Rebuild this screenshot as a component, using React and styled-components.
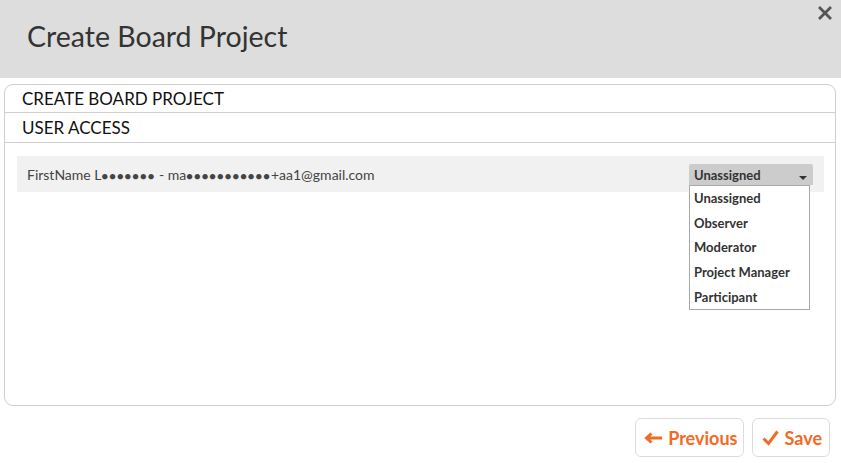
import React from "react";
import styled, { createGlobalStyle } from "styled-components";

const Global = createGlobalStyle`
  html, body { margin: 0; padding: 0; background: #fff; }
  body { font-family: Lato, "Open Sans", sans-serif; color: #333; }
  * { box-sizing: border-box; }
`;

const Modal = styled.div`
  width: 841px;
  height: 463px;
  display: flex;
  flex-direction: column;
  background: #fff;
`;

const Header = styled.header`
  position: relative;
  height: 78px;
  background: #dddddd;
  display: flex;
  align-items: center;
  padding: 0 0 6px 27px;
`;

const Title = styled.h1`
  margin: 0;
  font-size: 28.5px;
  font-weight: 400;
  color: #333;
`;

const Close = styled.button`
  position: absolute;
  top: 2px;
  right: 7px;
  border: 0;
  background: none;
  padding: 0;
  width: 18px;
  height: 22px;
  display: flex;
  align-items: center;
  justify-content: center;
  cursor: pointer;
`;

const Panel = styled.section`
  margin: 6px 5px 0 4px;
  height: 322px;
  border: 1px solid #cfcfcf;
  border-radius: 9px;
  display: flex;
  flex-direction: column;
`;

const PanelRow = styled.div`
  height: ${(p) => p.h}px;
  border-bottom: 1px solid #cfcfcf;
  padding: 0 17px;
  display: flex;
  align-items: center;
  font-size: 17px;
  color: #111;
`;

const Body = styled.div`
  flex: 1;
  padding: 13px 11px 0 12px;
`;

const UserRow = styled.div`
  height: 36px;
  background: #f1f1f1;
  display: flex;
  align-items: center;
  justify-content: space-between;
  padding: 0 11px 0 10px;
  font-size: 14px;
  color: #444;
`;

const Mask = styled.span`
  font-size: 11px;
  letter-spacing: 1.1px;
`;

const SelectWrap = styled.div`
  position: relative;
  width: 124px;
  margin-top: 1px;
`;

const SelectBox = styled.div`
  height: 21px;
  background: #cccccc;
  border-radius: 2px 2px 0 0;
  display: flex;
  align-items: center;
  justify-content: space-between;
  padding: 0 6px 0 5px;
  font-size: 13px;
  font-weight: 700;
  color: #333;
`;

const Caret = styled.span`
  width: 0;
  height: 0;
  border-left: 4px solid transparent;
  border-right: 4px solid transparent;
  border-top: 4px solid #333;
  margin-top: 6px;
`;

const Menu = styled.ul`
  position: absolute;
  top: 21px;
  left: 0;
  width: 121px;
  margin: 0;
  padding: 0;
  list-style: none;
  background: #fff;
  border: 1px solid #a9a9a9;
  z-index: 2;
`;

const Option = styled.li`
  height: 24.6px;
  display: flex;
  align-items: center;
  padding-left: 4px;
  font-size: 13px;
  font-weight: 700;
  color: #333;
`;

const Footer = styled.footer`
  display: flex;
  justify-content: flex-end;
  gap: 8px;
  padding: 12px 11px 0 0;
`;

const Btn = styled.button`
  height: 39px;
  padding: 0 ${(p) => p.pr}px 0 ${(p) => p.pl}px;
  border: 1px solid #dcdcdc;
  border-radius: 6px;
  background: #fff;
  display: flex;
  align-items: center;
  gap: 5px;
  font-family: Lato, sans-serif;
  font-size: 18px;
  font-weight: 700;
  color: #f26a25;
  cursor: pointer;
`;

const options = ["Unassigned", "Observer", "Moderator", "Project Manager", "Participant"];

export default function App() {
  return (
    <>
      <Global />
      <Modal>
        <Header>
          <Title>Create Board Project</Title>
          <Close aria-label="Close">
            <svg width="14" height="14" viewBox="0 0 14 14">
              <path d="M2 2 L12 12 M12 2 L2 12" stroke="#555" strokeWidth="2.8" strokeLinecap="square" />
            </svg>
          </Close>
        </Header>
        <Panel>
          <PanelRow h={28}>CREATE BOARD PROJECT</PanelRow>
          <PanelRow h={30}>USER ACCESS</PanelRow>
          <Body>
            <UserRow>
              <span>
                FirstName L<Mask>●●●●●●●</Mask> - ma<Mask>●●●●●●●●●●●</Mask>+aa1@gmail.com
              </span>
              <SelectWrap>
                <SelectBox>
                  <span>Unassigned</span>
                  <Caret />
                </SelectBox>
                <Menu>
                  {options.map((o) => (
                    <Option key={o}>{o}</Option>
                  ))}
                </Menu>
              </SelectWrap>
            </UserRow>
          </Body>
        </Panel>
        <Footer>
          <Btn pl={8} pr={6}>
            <svg width="19" height="12" viewBox="0 0 19 12">
              <path d="M18 6 H3 M7.5 1.5 L2.5 6 L7.5 10.5" stroke="#f26a25" strokeWidth="3" fill="none" strokeLinejoin="miter" />
            </svg>
            Previous
          </Btn>
          <Btn pl={9} pr={7}>
            <svg width="17" height="16" viewBox="0 0 17 16">
              <path d="M1.5 8.5 L6.5 13.5 L15.5 1.5" stroke="#f26a25" strokeWidth="3" fill="none" />
            </svg>
            Save
          </Btn>
        </Footer>
      </Modal>
    </>
  );
}
